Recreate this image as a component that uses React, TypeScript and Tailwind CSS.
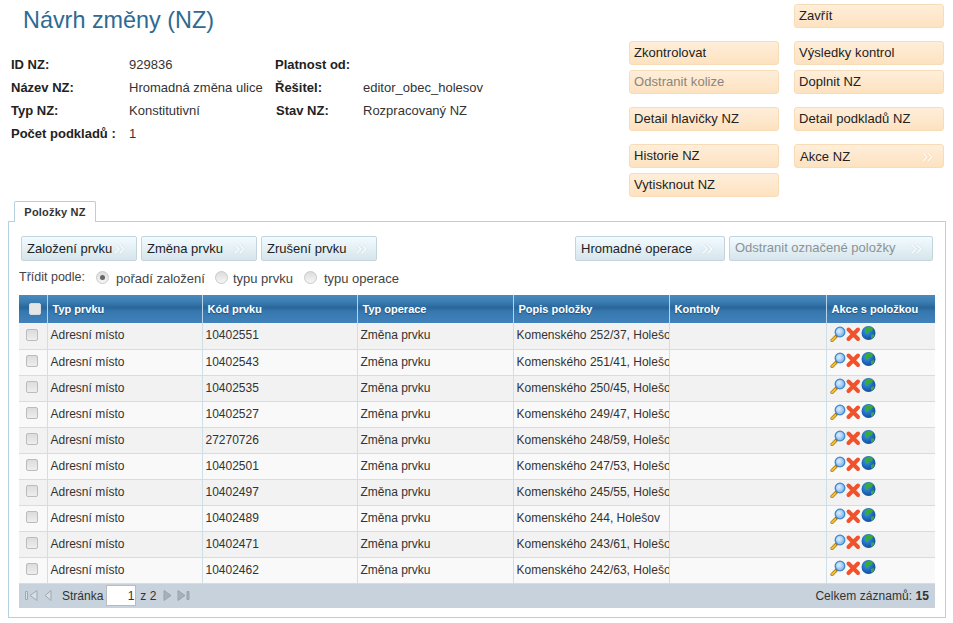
const rows = [
  ["10402551", "Komenského 252/37, Holešov"],
  ["10402543", "Komenského 251/41, Holešov"],
  ["10402535", "Komenského 250/45, Holešov"],
  ["10402527", "Komenského 249/47, Holešov"],
  ["27270726", "Komenského 248/59, Holešov"],
  ["10402501", "Komenského 247/53, Holešov"],
  ["10402497", "Komenského 245/55, Holešov"],
  ["10402489", "Komenského 244, Holešov"],
  ["10402471", "Komenského 243/61, Holešov"],
  ["10402462", "Komenského 242/63, Holešov"],
]

const headers = ["Typ prvku", "Kód prvku", "Typ operace", "Popis položky", "Kontroly", "Akce s položkou"]

function Chevrons({ edge, className = "" }: { edge: string; className?: string }) {
  return (
    <svg width="14" height="10" viewBox="0 0 14 10" className={className} fill="none">
      <path d="M2 1l4 4-4 4M7 1l4 4-4 4" stroke={edge} strokeWidth="2.6" />
      <path d="M2 1l4 4-4 4M7 1l4 4-4 4" stroke="#fdfdfb" strokeWidth="1.2" />
    </svg>
  )
}

function OrangeButton({ label, disabled, arrow, className = "" }: { label: string; disabled?: boolean; arrow?: boolean; className?: string }) {
  return (
    <div className={`flex h-6 w-[150px] items-center justify-between rounded-[3px] border border-[#f8dcb8] bg-gradient-to-b from-[#ffeeda] to-[#fde2c0] pl-1 pr-2 tracking-[0.05px] ${disabled ? "text-[#8a8580]" : "text-[#222]"} ${className}`}>
      <span className={arrow ? "mt-px ml-px" : ""}>{label}</span>
      {arrow && <Chevrons edge="#fbdcb8" className="mt-[1px]" />}
    </div>
  )
}

function BlueButton({ label, disabled, width, textWidth }: { label: string; disabled?: boolean; width: string; textWidth: string }) {
  return (
    <div className={`relative flex h-[25px] items-center rounded-[2px] border border-[#c5d5dd] bg-gradient-to-b from-[#f2fbff] to-[#d6e5ec] pl-[5px] ${disabled ? "text-[#8b9296]" : "text-[#222]"} ${width}`}>
      <span className={`whitespace-nowrap ${disabled ? "-mt-[2px]" : ""} ${textWidth}`}>{label}</span>
      <Chevrons edge="#d5e6ee" />
    </div>
  )
}

function Radio({ checked }: { checked?: boolean }) {
  return (
    <span className="flex h-[13px] w-[13px] items-center justify-center rounded-full border border-[#c9c9c9] bg-gradient-to-b from-[#dcdcdc] to-[#f6f6f6]">
      {checked && <span className="h-[5px] w-[5px] rounded-full bg-[#666]" />}
    </span>
  )
}

function CheckBox({ dark }: { dark?: boolean }) {
  return (
    <span className={`block h-[12px] w-[12px] rounded-[2px] border ${dark ? "border-[#d5dde3] bg-[#e6e6e6]" : "border-[#bcbcbc] bg-gradient-to-b from-[#dcdcdc] to-[#eeeeee]"}`} />
  )
}

function ActionIcons() {
  return (
    <svg width="48" height="16" viewBox="0 0 48 16">
      <defs>
        <radialGradient id="lens" cx="0.4" cy="0.4" r="0.7">
          <stop offset="0" stopColor="#dff0ff" />
          <stop offset="1" stopColor="#6aa9e6" />
        </radialGradient>
        <radialGradient id="globe" cx="0.4" cy="0.35" r="0.75">
          <stop offset="0" stopColor="#3b9bf0" />
          <stop offset="1" stopColor="#0a3f8f" />
        </radialGradient>
      </defs>
      <path d="M2 14.5l5-5" stroke="#a87410" strokeWidth="3.2" strokeLinecap="round" />
      <path d="M2 14.5l3.4-3.4" stroke="#f2c230" strokeWidth="2" strokeLinecap="round" />
      <circle cx="10" cy="6" r="4.8" fill="url(#lens)" stroke="#3f86cc" strokeWidth="1.3" />
      <path d="M18.5 3.5l9.5 9.5M28 3.5L18.5 13" stroke="#f0522c" strokeWidth="4" strokeLinecap="round" />
      <circle cx="38.5" cy="7" r="7" fill="url(#globe)" />
      <path d="M37 1c2-.8 4.5-.3 6 1.5l-1 2.5-3 .5-1.5 2.5-2-1.5-1-3zM41 9l3-1 .5 1.5-2 3-1.5 0z" fill="#3aa83a" />
    </svg>
  )
}

function PagerIcon({ d, fill = "#d7dee4", stroke = "#9fa9b2" }: { d: string; fill?: string; stroke?: string }) {
  return (
    <svg width="14" height="13" viewBox="0 0 14 13" fill={fill} stroke={stroke}>
      <path d={d} />
    </svg>
  )
}

export default function App() {
  return (
    <div className="h-[623px] w-[953px] overflow-hidden bg-white font-['Liberation_Sans',Arial,sans-serif] text-[13px] text-[#333]">
      {/* Header */}
      <div className="flex h-[201px]">
        <div className="w-[629px] pl-[11px]">
          <h1 className="pl-3 pt-[6px] text-[23.4px] leading-[28px] text-[#2e6a92]">Návrh změny (NZ)</h1>
          <div className="mt-[19px] grid grid-cols-[118px_146px_88px_1fr] text-[#333] [&>*]:h-[23px] [&>*]:leading-[23px]">
            <b className="text-[#222]">ID NZ:</b>
            <span>929836</span>
            <b className="text-[#222]">Platnost od:</b>
            <span />
            <b className="text-[#222]">Název NZ:</b>
            <span className="whitespace-nowrap">Hromadná změna ulice</span>
            <b className="text-[#222]">Řešitel:</b>
            <span>editor_obec_holesov</span>
            <b className="text-[#222]">Typ NZ:</b>
            <span>Konstitutivní</span>
            <b className="pl-px text-[#222]">Stav NZ:</b>
            <span>Rozpracovaný NZ</span>
            <b className="whitespace-nowrap text-[#222]">Počet podkladů :</b>
            <span>1</span>
          </div>
        </div>
        <div className="flex gap-[15px] pt-1">
          <div className="flex flex-col pt-[37px]">
            <OrangeButton label="Zkontrolovat" />
            <OrangeButton label="Odstranit kolize" disabled className="mt-[5px]" />
            <OrangeButton label="Detail hlavičky NZ" className="mt-[13px]" />
            <OrangeButton label="Historie NZ" className="mt-[13px]" />
            <OrangeButton label="Vytisknout NZ" className="mt-[5px]" />
          </div>
          <div className="flex flex-col">
            <OrangeButton label="Zavřít" />
            <OrangeButton label="Výsledky kontrol" className="mt-[13px]" />
            <OrangeButton label="Doplnit NZ" className="mt-[5px]" />
            <OrangeButton label="Detail podkladů NZ" className="mt-[13px]" />
            <OrangeButton label="Akce NZ" arrow className="mt-[13px]" />
          </div>
        </div>
      </div>

      {/* Tab */}
      <div className="relative z-10 ml-[14px] flex h-[21px] w-[82px] items-center justify-center rounded-t-[2px] border border-b-0 border-[#b5d0e0] bg-white text-[11px] font-bold tracking-[0.2px] text-[#333]">
        Položky NZ
      </div>

      {/* Panel */}
      <div className="ml-2 -mt-px h-[397px] w-[938px] border border-[#b5d0e0] px-[10px] pt-[14px]">
        <div className="flex justify-between px-[2px]">
          <div className="flex gap-1">
            <BlueButton label="Založení prvku" width="w-[116px]" textWidth="w-[86px]" />
            <BlueButton label="Změna prvku" width="w-[116px]" textWidth="w-[86px]" />
            <BlueButton label="Zrušení prvku" width="w-[116px]" textWidth="w-[88px]" />
          </div>
          <div className="flex gap-1">
            <BlueButton label="Hromadné operace" width="w-[150px]" textWidth="w-[120px]" />
            <BlueButton label="Odstranit označené položky" disabled width="w-[204px]" textWidth="w-[175px]" />
          </div>
        </div>

        <div className="mt-[9px] flex h-[17px] items-center text-[#444]">
          <span className="-mt-[3px] text-[12.5px]">Třídit podle:</span>
          <span className="ml-[11px] -mt-[3px]"><Radio checked /></span>
          <span className="ml-[7px]">pořadí založení</span>
          <span className="ml-[10px] -mt-[3px]"><Radio /></span>
          <span className="ml-[5px]">typu prvku</span>
          <span className="ml-[11px] -mt-[3px]"><Radio /></span>
          <span className="ml-[7px]">typu operace</span>
        </div>

        {/* Table */}
        <div className="mt-[8px] w-[916px] text-[12px] text-[#333]">
          <table className="w-full table-fixed border-collapse">
            <colgroup>
              <col className="w-[28px]" />
              <col className="w-[155px]" />
              <col className="w-[155px]" />
              <col className="w-[156px]" />
              <col className="w-[156px]" />
              <col className="w-[157px]" />
              <col className="w-[109px]" />
            </colgroup>
            <thead>
              <tr className="h-[28px] bg-[linear-gradient(#4a8abf_0%,#3b7cb2_25%,#2a6699_45%,#3678b0_60%,#4282ba_100%)] text-left text-[11px] font-bold text-white [text-shadow:0_1px_1px_#1f4f78]">
                <th className="p-0 pl-[10px]"><CheckBox dark /></th>
                {headers.map((h) => (
                  <th key={h} className="overflow-hidden border-l border-[#b9d3e6] p-0 pl-[5px] font-bold whitespace-nowrap">{h}</th>
                ))}
              </tr>
            </thead>
            <tbody>
              {rows.map(([code, desc], i) => (
                <tr key={code} className={`h-[26px] border-b border-[#cfdfe8] ${i % 2 === 0 ? "bg-[#f2f2f2]" : "bg-[#f9f9f9]"}`}>
                  <td className="p-0 pb-[2px] pl-[7px]"><CheckBox /></td>
                  <td className="border-l border-[#cfdfe8] p-0 pb-[1px] pl-[3px]">Adresní místo</td>
                  <td className="border-l border-[#cfdfe8] p-0 pb-[1px] pl-[3px]">{code}</td>
                  <td className="border-l border-[#cfdfe8] p-0 pb-[1px] pl-[3px]">Změna prvku</td>
                  <td className="overflow-hidden border-l border-[#cfdfe8] p-0 pb-[1px] pl-[3px] whitespace-nowrap">{desc}</td>
                  <td className="border-l border-[#cfdfe8] p-0" />
                  <td className="border-l border-[#cfdfe8] p-0 pb-[4px] pl-[3px]"><ActionIcons /></td>
                </tr>
              ))}
            </tbody>
          </table>
          {/* Pager */}
          <div className="flex h-6 items-center bg-[#c8d2dc] pl-[5px] pr-[6px]">
            <PagerIcon d="M1.5 2.5h2v8h-2zM13 1.5v10L6 6.5z" />
            <span className="ml-[5px]">
              <PagerIcon d="M8 1.5v10L2 6.5z" />
            </span>
            <span className="ml-[5px]">Stránka</span>
            <span className="ml-[3px] flex h-[21px] w-[30px] items-center justify-end border border-[#bbb] bg-white pr-[1px]">1</span>
            <span className="ml-[4px]">z 2</span>
            <span className="ml-[6px] flex gap-[1px]">
              <PagerIcon d="M2 1.5v10l7-5z" fill="#a6b0ba" stroke="#98a3ad" />
              <PagerIcon d="M1 1.5v10l7-5zM10 2.5h2v8h-2z" fill="#a6b0ba" stroke="#98a3ad" />
            </span>
            <span className="ml-auto tracking-[0.05px]">Celkem záznamů: <b>15</b></span>
          </div>
        </div>
      </div>
    </div>
  )
}
